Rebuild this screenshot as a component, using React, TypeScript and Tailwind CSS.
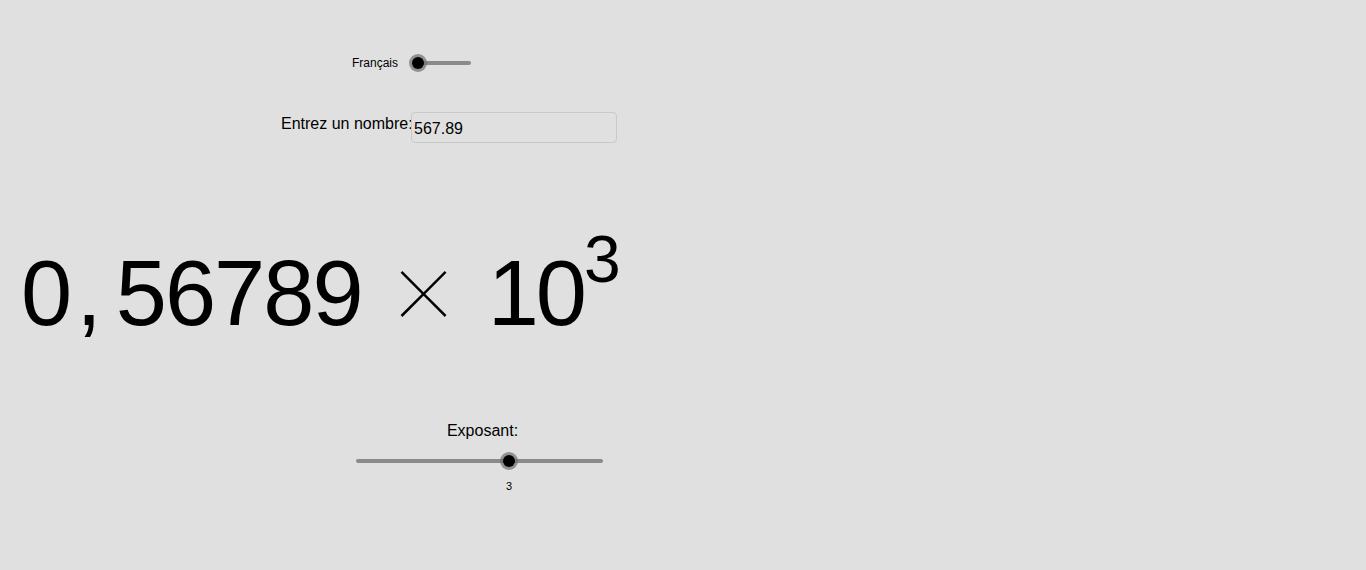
import type { ReactNode } from 'react';

const sans = { fontFamily: '"Liberation Sans", Arial, sans-serif' };

interface SliderProps {
  className: string;
  fraction: number;
  children?: ReactNode;
}

// GeoGebra style slider: grey rail, black knob with a soft halo
function Slider({ className, fraction, children }: SliderProps) {
  return (
    <div className={`relative flex h-[20px] items-center ${className}`}>
      <div className="h-[4px] w-full rounded-full bg-[#8a8a8a]" />
      <div
        className="absolute top-[1px] flex h-[18px] w-[18px] -translate-x-1/2 items-center justify-center rounded-full bg-[#6e6e6e]/70"
        style={{ left: `${fraction * 100}%` }}
      >
        <div className="h-[12px] w-[12px] rounded-full bg-black" />
      </div>
      {children}
    </div>
  );
}

export default function App() {
  return (
    <div className="h-[570px] w-[1366px] overflow-hidden bg-[#e0e0e0] text-black" style={sans}>
      <div className="flex pl-[352px] pt-[53px]">
        <div className="flex h-[20px] w-[66px] items-center text-[12px] leading-none">Français</div>
        <Slider className="w-[53px]" fraction={0} />
      </div>

      <div className="mt-[39px] flex items-start pl-[281px]">
        <div className="w-[130px] pt-[3px] text-[16px] leading-[18px] whitespace-nowrap">Entrez un nombre:</div>
        <div className="h-[31px] w-[206px] rounded-[4px] border border-[#c9c9c9] pl-[2px] pt-[7px] text-[16px] leading-[18px]">
          567.89
        </div>
      </div>

      <div className="mt-[83px] pl-[21px] text-[92px] leading-[92px] whitespace-nowrap">
        <span className="tracking-[-2px]">0</span>
        <span className="ml-[6px]">,</span>
        <span className="ml-[14px] tracking-[-2px]">56789</span>
        <span className="ml-[27px] text-[110px] font-thin" style={{ fontFamily: 'Inter, "Liberation Sans", sans-serif' }}>×</span>
        <span className="ml-[29px] tracking-[-3px]">10</span>
        <span className="ml-[0px] text-[66px] leading-[66px] [vertical-align:43px]">3</span>
      </div>

      <div className="mt-[83px] flex flex-col pl-[356px]">
        <div className="w-[253px] text-center text-[16px] leading-[18px]">Exposant:</div>
        <Slider className="mt-[11px] w-[247px]" fraction={0.62}>
          <div className="absolute left-[153px] top-[29px] -translate-x-1/2 text-[11px] leading-[13px]">3</div>
        </Slider>
      </div>
    </div>
  );
}
